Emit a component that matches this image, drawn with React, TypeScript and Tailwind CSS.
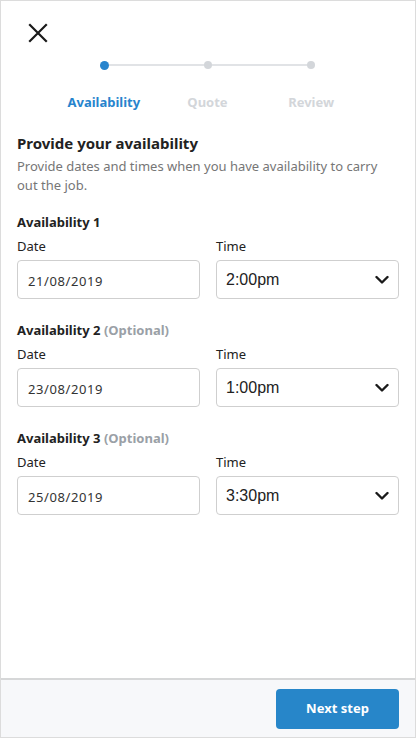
import React from "react";

const font = { fontFamily: '"Noto Sans", "Open Sans", sans-serif' };

function Chevron() {
  return (
    <svg width="14" height="9" viewBox="0 0 14 9" className="absolute right-[9px] top-1/2 -translate-y-1/2">
      <path d="M1.5 1.5 L7 7 L12.5 1.5" fill="none" stroke="#1a1a1a" strokeWidth="2.4" strokeLinecap="round" strokeLinejoin="round" />
    </svg>
  );
}

function Row({ n, optional, date, time }: { n: number; optional?: boolean; date: string; time: string }) {
  return (
    <div className="flex flex-col">
      <div className="text-[13px] font-bold text-[#222] leading-[18px]">
        Availability {n}
        {optional && <span className="text-[#9aa0a6]"> (Optional)</span>}
      </div>
      <div className="grid grid-cols-2 gap-4 mt-[6px]">
        <div className="flex flex-col">
          <div className="text-[13px] text-[#222] leading-[18px]">Date</div>
          <div className="mt-[5px] h-[39px] border border-[#cfcfcf] rounded-[4px] flex items-center pl-[10px] pt-[4px] text-[13px] text-[#333] tracking-[0.6px]">
            {date}
          </div>
        </div>
        <div className="flex flex-col">
          <div className="text-[13px] text-[#222] leading-[18px]">Time</div>
          <div className="mt-[5px] relative h-[39px] border border-[#cfcfcf] rounded-[4px] flex items-center pl-[9px] text-[16px] text-[#222]" style={{ fontFamily: '"Liberation Sans", Arial, sans-serif' }}>
            {time}
            <Chevron />
          </div>
        </div>
      </div>
    </div>
  );
}

export default function App() {
  return (
    <div className="w-[416px] h-[738px] border border-[#dcdcdc] bg-white flex flex-col" style={font}>
      <div className="flex-1 flex flex-col px-4">
        <div className="pt-[22px] pl-[11px]">
          <svg width="20" height="20" viewBox="0 0 20 20">
            <path d="M2 2 L18 18 M18 2 L2 18" stroke="#1a1a1a" strokeWidth="2.2" strokeLinecap="square" />
          </svg>
        </div>
        <div className="relative mt-[17px] h-[10px] ml-[83px] mr-[84px]">
          <div className="absolute left-[3px] right-[3px] top-[4px] h-[2px] bg-[#e1e3e6]" />
          <div className="absolute left-0 top-[0.5px] w-[9px] h-[9px] rounded-full bg-[#2784cd]" />
          <div className="absolute left-1/2 -translate-x-1/2 top-[1px] w-[8px] h-[8px] rounded-full bg-[#d3d6da]" />
          <div className="absolute right-0 top-[1px] w-[8px] h-[8px] rounded-full bg-[#d3d6da]" />
        </div>
        <div className="grid grid-cols-3 mt-[23px] ml-[35px] mr-[36px] text-[13px] font-bold leading-[18px] text-center">
          <div className="text-[#2784cd]">Availability</div>
          <div className="text-[#d3d6da]">Quote</div>
          <div className="text-[#d3d6da]">Review</div>
        </div>
        <div className="mt-[21px] text-[15px] font-bold text-[#222] leading-[22px]">Provide your availability</div>
        <div className="mt-[3px] text-[13px] text-[#767676] leading-[19px]">
          Provide dates and times when you have availability to carry out the job.
        </div>
        <div className="mt-[18px] flex flex-col gap-[22px]">
          <Row n={1} date="21/08/2019" time="2:00pm" />
          <Row n={2} optional date="23/08/2019" time="1:00pm" />
          <Row n={3} optional date="25/08/2019" time="3:30pm" />
        </div>
      </div>
      <div className="h-[59px] border-t-2 border-[#d6d7d8] bg-[#f7f8fa] flex items-start justify-end pr-[16px] pt-[9px]">
        <button className="w-[123px] h-[40px] rounded-[4px] bg-[#2786c9] text-white text-[13px] font-bold">Next step</button>
      </div>
    </div>
  );
}
